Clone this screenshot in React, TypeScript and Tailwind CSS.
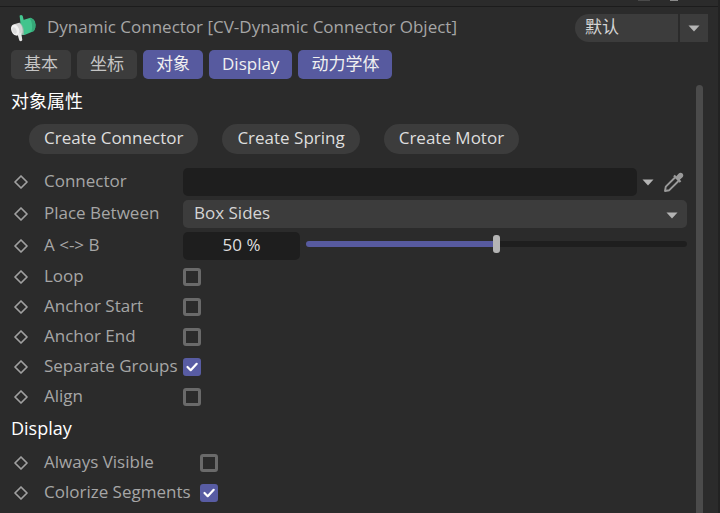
import { useState } from "react";

const tabs = [
  { label: "基本", active: false },
  { label: "坐标", active: false },
  { label: "对象", active: true },
  { label: "Display", active: true },
  { label: "动力学体", active: true },
];

const actions = ["Create Connector", "Create Spring", "Create Motor"];

const objectFlags = [
  { id: "loop", label: "Loop", on: false },
  { id: "anchor-start", label: "Anchor Start", on: false },
  { id: "anchor-end", label: "Anchor End", on: false },
  { id: "separate-groups", label: "Separate Groups", on: true },
  { id: "align", label: "Align", on: false },
];

const displayFlags = [
  { id: "always-visible", label: "Always Visible", on: false },
  { id: "colorize-segments", label: "Colorize Segments", on: true },
];

function Arrow({ className = "" }: { className?: string }) {
  return (
    <svg viewBox="0 0 12 7" className={`w-3 h-[7px] text-[#b4b4b4] ${className}`} fill="currentColor" aria-hidden="true">
      <path d="M0.5 0.5h11L6 6.5z" />
    </svg>
  );
}

function Diamond() {
  return (
    <svg viewBox="0 0 14 14" className="w-[14px] h-[14px] shrink-0 text-[#a0a0a0]" fill="none" stroke="currentColor" strokeWidth="1.7" aria-hidden="true">
      <path d="M7 1 13 7 7 13 1 7z" strokeLinejoin="round" />
    </svg>
  );
}

function ConnectorIcon() {
  return (
    <svg viewBox="0 0 26 28" className="w-[26px] h-7 shrink-0" aria-hidden="true">
      <path d="M9.6 1.8q1.4-1.400 3 0l1.400 5.200-3.200 4z" fill="#45c791" />
      <path d="M10.500 9q1-2.500 3.500-3.200l6.500-2q4.600 1.200 5.100 7 .100 4.200-1.600 6.200L14.500 21q-3 .600-4-3z" fill="#42c48d" />
      <path d="M19.500 4.100q4.800.200 5.900 6.700.200 4.200-1.600 6.200l-2.300.800Q23.500 9.500 19.500 4.100z" fill="#35a878" />
      <path d="M9.800 8.500q4.700 4 4.200 12.300l-3.500.200-3-10.500z" fill="#8fb8a5" />
      <path d="M4 10.300 9.200 8.800q4.300 3.700 3.300 10.400L6.500 21.500z" fill="#d3d3d3" />
      <ellipse cx="5.200" cy="16" rx="3.900" ry="5.800" transform="rotate(-20 5.200 16)" fill="#f1f1f1" />
      <ellipse cx="4.500" cy="16.500" rx="2" ry="3.400" transform="rotate(-20 4.500 16.500)" fill="#dcdcdc" />
      <path d="M7.500 20 11.200 18.500l1.100 7.500q-1.300 2.200-3 .6z" fill="#e6e6e6" />
    </svg>
  );
}

function Eyedropper() {
  return (
    <svg viewBox="0 0 20 20" className="w-5 h-5" aria-hidden="true">
      <path d="M11 5.500 1.800 14.700 1 19l4.300-.800L14.500 9" fill="none" stroke="#9a9a9a" strokeWidth="1.900" strokeLinejoin="round" />
      <path d="m12.300 4.200 2.200-2.500q2-1.900 4-.200 1.700 2-.200 4l-2.500 2.200 1.500 1.500-1.600 1.600L9.200 4.300 10.800 2.700z" fill="#9a9a9a" />
    </svg>
  );
}

function FlagRow({ id, label, on, wide = false }: { id: string; label: string; on: boolean; wide?: boolean }) {
  const [checked, setChecked] = useState(on);
  return (
    <div className="flex items-center h-[30px] pl-[3px]">
      <Diamond />
      <label htmlFor={id} className={`ml-4 pb-[2px] shrink-0 whitespace-nowrap ${wide ? "w-[156px]" : "w-[139px]"}`}>
        {label}
      </label>
      <span className="relative w-[18px] h-[18px] shrink-0">
        <input
          id={id}
          type="checkbox"
          checked={checked}
          onChange={() => setChecked(!checked)}
          className="block appearance-none w-[18px] h-[18px] rounded-[3px] border-3 border-[#6a6a6a] checked:border-[#585ca3] checked:bg-[#585ca3]"
        />
        {checked && (
          <svg viewBox="0 0 18 18" className="absolute inset-0 pointer-events-none" fill="none" stroke="#fff" strokeWidth="2.2" aria-hidden="true">
            <path d="m4.500 9 3.200 3.200 6-6.400" strokeLinecap="round" strokeLinejoin="round" />
          </svg>
        )}
      </span>
    </div>
  );
}

export default function App() {
  const [amount, setAmount] = useState(50);

  return (
    <div className="flex flex-col min-h-screen bg-[#2b2b2b] border-r-2 border-[#222222] text-[17px] leading-6 text-[#a6a6a6] font-['Open_Sans','Noto_Sans_CJK_SC',sans-serif]">
      {/* Lower edge of the toolbar above */}
      <div className="flex justify-end gap-5 h-[7px] shrink-0 pr-10 border-b border-[#1c1c1c]">
        <span className="w-3 h-px bg-[#4a4a4a]" />
        <span className="w-2 h-px bg-[#8a8a8a]" />
      </div>

      {/* Title */}
      <header className="flex items-center h-[42px] px-[10px]">
        <ConnectorIcon />
        <h1 className="ml-[11px] pb-[2px] grow whitespace-nowrap">Dynamic Connector [CV-Dynamic Connector Object]</h1>
        <div className="relative flex w-[133px] h-7">
          <select aria-label="预设" className="appearance-none w-full rounded-l-full rounded-r-lg bg-[#3c3c3c] pl-[10px] pb-[2px] text-[#d4d4d4]">
            <option>默认</option>
          </select>
          <span className="absolute right-0 inset-y-0 flex w-[30px] items-center justify-center border-l-2 border-[#2b2b2b] pointer-events-none">
            <Arrow />
          </span>
        </div>
      </header>

      {/* Tabs */}
      <nav className="flex gap-[6px] pl-[11px] pt-px">
        {tabs.map((t) => (
          <button
            key={t.label}
            className={`h-[29px] px-[13px] pb-[2px] rounded-[5px] whitespace-nowrap ${
              t.active ? "bg-[#575a9f] text-[#f0f0f0]" : "bg-[#3c3c3c] text-[#c4c4c4]"
            }`}
          >
            {t.label}
          </button>
        ))}
      </nav>

      <div className="flex grow pt-[6px]">
        <main className="grow min-w-0 pl-[11px]">
          <h2 className="flex items-center h-[34px] pb-[2px] text-lg text-white">对象属性</h2>
          <div className="flex gap-6 pl-[18px] pt-[5px] pb-[14px]">
            {actions.map((a) => (
              <button key={a} className="h-[30px] px-[15px] pb-[2px] rounded-full bg-[#3c3c3c] text-[#dedede] whitespace-nowrap">
                {a}
              </button>
            ))}
          </div>

          <div className="flex flex-col gap-1 pb-[2px]">
            <div className="flex items-center h-7 pl-[3px]">
              <Diamond />
              <label htmlFor="connector" className="ml-4 pb-[2px] w-[139px] shrink-0">Connector</label>
              <input id="connector" type="text" className="grow min-w-0 h-7 px-3 rounded-[5px] bg-[#1e1e1e] text-[#d4d4d4]" />
              <button aria-label="列表" className="ml-[5px]">
                <Arrow />
              </button>
              <button aria-label="拾取" className="ml-[10px] mr-3">
                <Eyedropper />
              </button>
            </div>

            <div className="flex items-center h-7 pl-[3px] pr-[9px]">
              <Diamond />
              <label htmlFor="place" className="ml-4 pb-[2px] w-[139px] shrink-0 whitespace-nowrap">Place Between</label>
              <div className="relative grow">
                <select id="place" className="block appearance-none w-full h-7 pl-[11px] pb-[2px] rounded-[5px] bg-[#3c3c3c] text-[#d4d4d4]">
                  <option>Box Sides</option>
                </select>
                <Arrow className="absolute right-[9px] top-3 pointer-events-none" />
              </div>
            </div>

            <div className="flex items-center h-7 pl-[3px] pr-[9px]">
              <Diamond />
              <label htmlFor="amount" className="ml-4 pb-[2px] w-[139px] shrink-0">A &lt;-&gt; B</label>
              <input
                id="amount"
                type="text"
                value={`${amount} %`}
                onChange={(e) => setAmount(Math.min(100, parseInt(e.target.value) || 0))}
                className="w-[117px] h-7 pb-1 rounded-[5px] bg-[#1e1e1e] text-center text-[#dedede]"
              />
              <input
                type="range"
                aria-label="A <-> B"
                value={amount}
                onChange={(e) => setAmount(Number(e.target.value))}
                style={{ backgroundImage: `linear-gradient(to right, #575a9f ${amount}%, #1e1e1e ${amount}%)` }}
                className="ml-[6px] mb-1 grow min-w-0 h-[6px] appearance-none rounded-full [&::-webkit-slider-thumb]:appearance-none [&::-webkit-slider-thumb]:w-[7px] [&::-webkit-slider-thumb]:h-[18px] [&::-webkit-slider-thumb]:rounded-[3px] [&::-webkit-slider-thumb]:bg-[#b4b4b4]"
              />
            </div>
          </div>

          {objectFlags.map((f) => (
            <FlagRow key={f.id} {...f} />
          ))}

          <h2 className="flex items-center h-[34px] mb-[2px] pb-[2px] text-lg text-white">Display</h2>
          {displayFlags.map((f) => (
            <FlagRow key={f.id} {...f} wide />
          ))}
        </main>

        {/* Scrollbar */}
        <div className="w-[7px] mr-[15px] shrink-0 rounded-t-full bg-[#4b4b4b]" />
      </div>
    </div>
  );
}
